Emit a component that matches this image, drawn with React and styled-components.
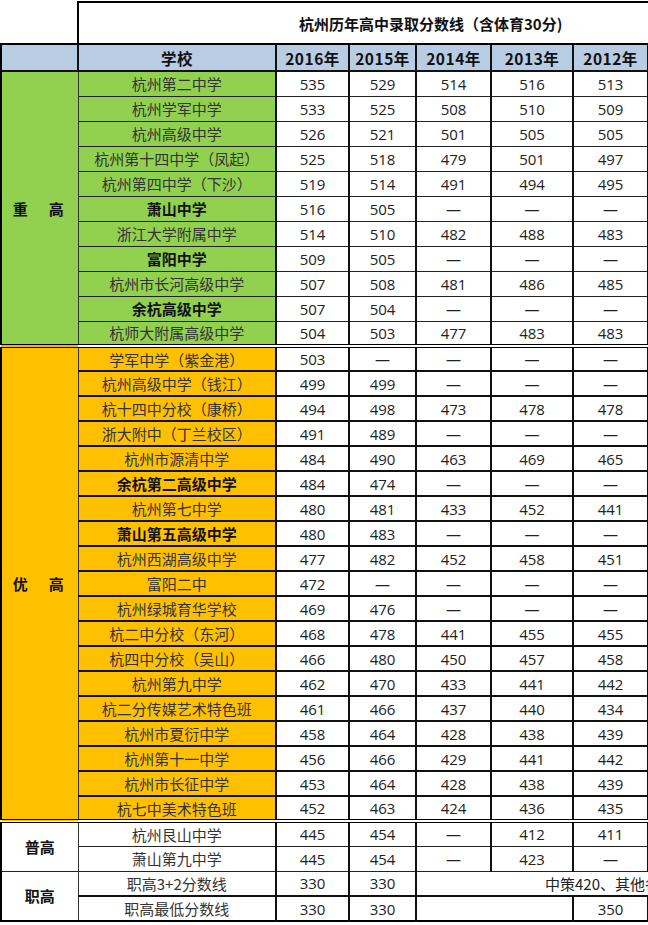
import styled, { createGlobalStyle } from "styled-components";

const GlobalStyle = createGlobalStyle`
  html, body {
    margin: 0;
    padding: 0;
    background: #fff;
  }
  body {
    font-family: "Open Sans", "Noto Sans CJK SC", sans-serif;
    color: #222;
  }
`;

const Page = styled.div`
  width: 648px;
  height: 925px;
  overflow: hidden;
  padding-top: 1px;
`;

const Sheet = styled.table`
  border-collapse: collapse;
  table-layout: fixed;
  width: 647px;
  font-size: 15px;
`;

const Row = styled.tr`
  height: ${(p) => p.$h || 25}px;
  border-top: ${(p) =>
    p.$sep === "double"
      ? "4px double #000"
      : p.$sep === "thick"
      ? "2px solid #111"
      : "1px solid #222"};
`;

const Blank = styled.td`
  border: none;
  padding: 0;
`;

const TitleCell = styled.td`
  border: 2px solid #000;
  border-right: none;
  padding: 0 0 0 220px;
  font-family: "Noto Sans CJK SC", sans-serif;
  font-weight: bold;
  font-size: 15px;
  color: #111;
  white-space: nowrap;
`;

const HeadCell = styled.th`
  background: #b8cce4;
  border: 2px solid #111;
  border-left-width: ${(p) => (p.$corner ? 2 : 2)}px;
  padding: 0;
  font-family: "Noto Sans CJK SC", sans-serif;
  font-weight: bold;
  font-size: 15.5px;
  color: #111;
  text-align: center;
  letter-spacing: 0.5px;
`;

const CornerCell = styled.th`
  background: #b8cce4;
  border-left: 2px solid #000;
  border-right: 1px solid #777;
  border-top: 2px solid #000;
  padding: 0;
`;

const GroupCell = styled.td`
  background: ${(p) => p.$bg || "#fff"};
  border-left: 2px solid #000;
  border-right: 1px solid #333;
  border-top: ${(p) => (p.$double ? "4px double #000" : "1px solid #222")};
  padding: 0;
  font-family: "Noto Sans CJK SC", sans-serif;
  font-weight: bold;
  font-size: 15px;
  color: #111;
  text-align: center;
  vertical-align: middle;
  letter-spacing: ${(p) => (p.$spread ? "3px" : "0")};
  white-space: pre;
  ${(p) => p.$bottom && "border-bottom: 2px solid #000;"}
`;

const NameCell = styled.td`
  background: ${(p) => p.$bg || "#fff"};
  border-left: 1px solid #333;
  border-right: 2px solid #111;
  padding: 0;
  font-family: "Noto Sans CJK SC", sans-serif;
  font-weight: ${(p) => (p.$bold ? "bold" : "normal")};
  font-size: 15px;
  color: ${(p) => (p.$bold ? "#111" : "#333")};
  text-align: center;
  white-space: nowrap;
  overflow: hidden;
`;

const ScoreCell = styled.td`
  border-left: 2px solid #111;
  border-right: 2px solid #111;
  padding: 0;
  text-align: center;
  font-size: 15px;
  color: #222;
  white-space: nowrap;
`;

const NoteCell = styled.td`
  border-left: 2px solid #111;
  padding: 0 0 0 128px;
  font-family: "Noto Sans CJK SC", sans-serif;
  font-size: 15px;
  color: #222;
  white-space: nowrap;
  overflow: visible;
`;

const D = "—";

const groups = [
  {
    label: "重　高",
    bg: "#92d050",
    spread: true,
    rows: [
      ["杭州第二中学", 0, [535, 529, 514, 516, 513]],
      ["杭州学军中学", 0, [533, 525, 508, 510, 509]],
      ["杭州高级中学", 0, [526, 521, 501, 505, 505]],
      ["杭州第十四中学（凤起）", 0, [525, 518, 479, 501, 497]],
      ["杭州第四中学（下沙）", 0, [519, 514, 491, 494, 495]],
      ["萧山中学", 1, [516, 505, D, D, D]],
      ["浙江大学附属中学", 0, [514, 510, 482, 488, 483]],
      ["富阳中学", 1, [509, 505, D, D, D]],
      ["杭州市长河高级中学", 0, [507, 508, 481, 486, 485]],
      ["余杭高级中学", 1, [507, 504, D, D, D]],
      ["杭师大附属高级中学", 0, [504, 503, 477, 483, 483]],
    ],
  },
  {
    label: "优　高",
    bg: "#ffc000",
    spread: true,
    sep: "double",
    inner: "thick",
    rows: [
      ["学军中学（紫金港）", 0, [503, D, D, D, D]],
      ["杭州高级中学（钱江）", 0, [499, 499, D, D, D]],
      ["杭十四中分校（康桥）", 0, [494, 498, 473, 478, 478]],
      ["浙大附中（丁兰校区）", 0, [491, 489, D, D, D]],
      ["杭州市源清中学", 0, [484, 490, 463, 469, 465]],
      ["余杭第二高级中学", 1, [484, 474, D, D, D]],
      ["杭州第七中学", 0, [480, 481, 433, 452, 441]],
      ["萧山第五高级中学", 1, [480, 483, D, D, D]],
      ["杭州西湖高级中学", 0, [477, 482, 452, 458, 451]],
      ["富阳二中", 0, [472, D, D, D, D]],
      ["杭州绿城育华学校", 0, [469, 476, D, D, D]],
      ["杭二中分校（东河）", 0, [468, 478, 441, 455, 455]],
      ["杭四中分校（吴山）", 0, [466, 480, 450, 457, 458]],
      ["杭州第九中学", 0, [462, 470, 433, 441, 442]],
      ["杭二分传媒艺术特色班", 0, [461, 466, 437, 440, 434]],
      ["杭州市夏衍中学", 0, [458, 464, 428, 438, 439]],
      ["杭州第十一中学", 0, [456, 466, 429, 441, 442]],
      ["杭州市长征中学", 0, [453, 464, 428, 438, 439]],
      ["杭七中美术特色班", 0, [452, 463, 424, 436, 435]],
    ],
  },
  {
    label: "普高",
    sep: "double",
    rows: [
      ["杭州艮山中学", 0, [445, 454, D, 412, 411]],
      ["萧山第九中学", 0, [445, 454, D, 423, D]],
    ],
  },
];

const years = ["2016年", "2015年", "2014年", "2013年", "2012年"];

export default function App() {
  return (
    <Page>
      <GlobalStyle />
      <Sheet>
        <colgroup>
          <col style={{ width: 77 }} />
          <col style={{ width: 198 }} />
          <col style={{ width: 73 }} />
          <col style={{ width: 67 }} />
          <col style={{ width: 75 }} />
          <col style={{ width: 82 }} />
          <col style={{ width: 75 }} />
        </colgroup>
        <tbody>
          <Row $h={42} style={{ borderTop: "none" }}>
            <Blank />
            <TitleCell colSpan={6}>杭州历年高中录取分数线（含体育30分)</TitleCell>
          </Row>
          <Row $h={27} $sep="thick">
            <CornerCell />
            <HeadCell>学校</HeadCell>
            {years.map((y) => (
              <HeadCell key={y}>{y}</HeadCell>
            ))}
          </Row>
          {groups.map((g) =>
            g.rows.map(([name, bold, scores], i) => (
              <Row
                key={name}
                $sep={i === 0 ? g.sep || "thick" : g.inner}
              >
                {i === 0 && (
                  <GroupCell
                    rowSpan={g.rows.length}
                    $bg={g.bg}
                    $spread={g.spread}
                    $double={!!g.sep}
                  >
                    {g.label}
                  </GroupCell>
                )}
                <NameCell $bg={g.bg} $bold={!!bold}>
                  {name}
                </NameCell>
                {scores.map((s, j) => (
                  <ScoreCell key={j}>{s}</ScoreCell>
                ))}
              </Row>
            ))
          )}
          <Row>
            <GroupCell rowSpan={2} $bottom>
              职高
            </GroupCell>
            <NameCell>职高3+2分数线</NameCell>
            <ScoreCell>330</ScoreCell>
            <ScoreCell>330</ScoreCell>
            <NoteCell colSpan={3}>中策420、其他各校350</NoteCell>
          </Row>
          <Row $sep="thick" style={{ borderBottom: "2px solid #000" }}>
            <NameCell>职高最低分数线</NameCell>
            <ScoreCell>330</ScoreCell>
            <ScoreCell>330</ScoreCell>
            <ScoreCell colSpan={2} />
            <ScoreCell>350</ScoreCell>
          </Row>
        </tbody>
      </Sheet>
    </Page>
  );
}
